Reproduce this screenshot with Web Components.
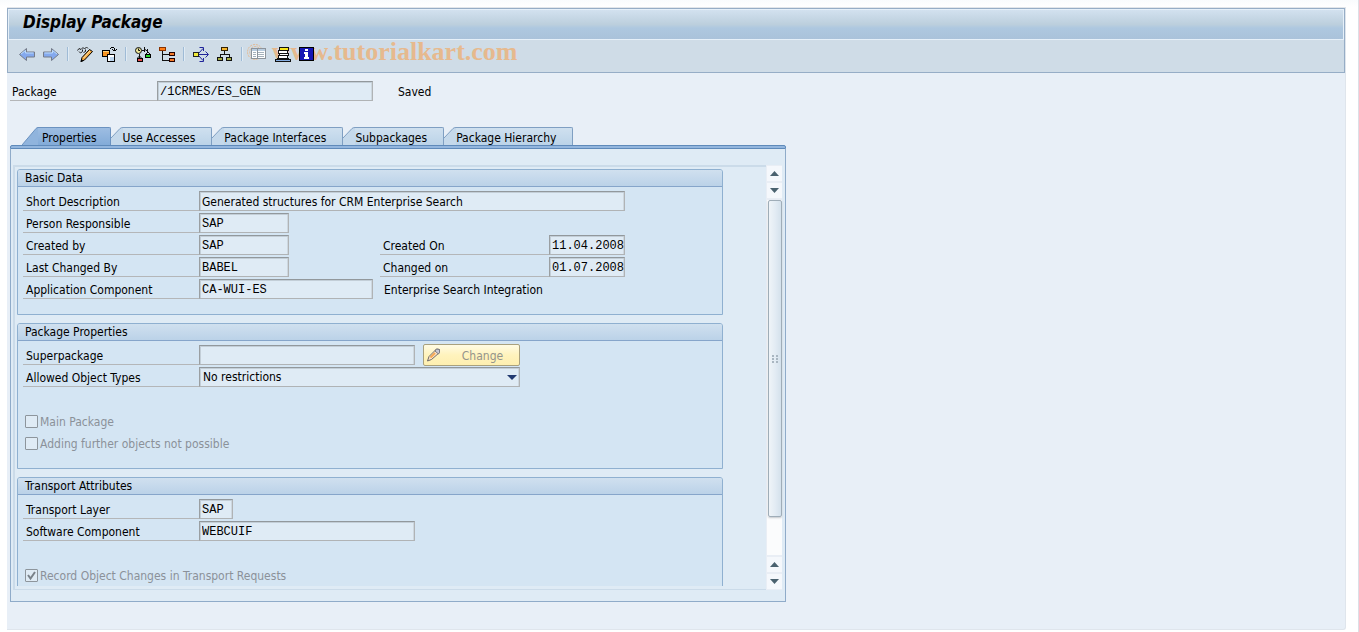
<!DOCTYPE html>
<html lang="en">
<head>
<meta charset="utf-8">
<title>Display Package</title>
<style>
    html, body{
        margin: 0;
        height: 100%;
    }
    body{
        background: linear-gradient(#f9fbfd, #ffffff 7px);
        font-family: "DejaVu Sans Condensed", "DejaVu Sans", sans-serif;
        font-size: 12px;
        color: #000000;
    }
    /* two fields side by side in a group */
    .pair{
        display: grid;
        grid-template-columns: 357px 245px;
    }
    .spacer{
        height: 20px;
    }
</style>
</head>
<body>
<sap-window heading="Display Package">
    <tool-bar slot="toolbar"></tool-bar>
    <form-field label="Package" value="/1CRMES/ES_GEN" size="216" class="package" style="--label-width: 147px; --label-pad: 2px">
        <span style="margin-left: 25px">Saved</span>
    </form-field>
    <tab-strip tabs="Properties|Use Accesses|Package Interfaces|Subpackages|Package Hierarchy">
        <group-box heading="Basic Data">
            <form-field label="Short Description" value="Generated structures for CRM Enterprise Search" size="426" plain></form-field>
            <form-field label="Person Responsible" value="SAP" size="90"></form-field>
            <div class="pair">
                <form-field label="Created by" value="SAP" size="90"></form-field>
                <form-field label="Created On" value="11.04.2008" size="76" style="--label-width: 169px"></form-field>
            </div>
            <div class="pair">
                <form-field label="Last Changed By" value="BABEL" size="90"></form-field>
                <form-field label="Changed on" value="01.07.2008" size="76" style="--label-width: 169px"></form-field>
            </div>
            <form-field label="Application Component" value="CA-WUI-ES" size="174">
                <span style="margin-left: 11px">Enterprise Search Integration</span>
            </form-field>
        </group-box>
        <group-box heading="Package Properties">
            <form-field label="Superpackage" value="" size="216">
                <change-button>Change</change-button>
            </form-field>
            <form-select label="Allowed Object Types" value="No restrictions" size="321"></form-select>
            <div class="spacer"></div>
            <check-field label="Main Package"></check-field>
            <check-field label="Adding further objects not possible"></check-field>
        </group-box>
        <group-box heading="Transport Attributes">
            <form-field label="Transport Layer" value="SAP" size="34"></form-field>
            <form-field label="Software Component" value="WEBCUIF" size="216"></form-field>
            <div class="spacer"></div>
            <check-field label="Record Object Changes in Transport Requests" checked></check-field>
        </group-box>
    </tab-strip>
</sap-window>

<template id="window-template">
    <style>
        :host{
            display: flex;
            box-sizing: border-box;
            height: 100%;
            min-height: 600px;
            padding: 7px 12px 2px 7px;
            border-right: 1px solid #dcdfe6;
        }
        .frame{
            flex: 1;
            min-width: 0;
            display: flex;
            flex-direction: column;
            box-sizing: border-box;
            background: #e8eff7;
            border-top: 1px solid #e3e6ea;
            border-right: 1px solid #dfe5ec;
            border-bottom: 1px solid #dfe5ec;
            border-radius: 0 0 3px 0;
        }
        header{
            border: 1px solid #96adc6;
        }
        h1{
            box-sizing: border-box;
            height: 31px;
            margin: 0;
            padding: 0 14px;
            border: 1px solid #e6f0f9;
            background: linear-gradient(#d2e1ef, #bccfdd 50%, #aec8e0 62%, #aac2da);
            font-size: 17px;
            line-height: 25px;
            font-style: italic;
            font-weight: bold;
        }
        main{
            flex: 1;
            min-height: 0;
            display: flex;
            flex-direction: column;
            gap: 26px;
            padding: 8px 3px 27px;
        }
    </style>
    <div class="frame">
        <header>
            <h1></h1>
            <slot name="toolbar"></slot>
        </header>
        <main><slot></slot></main>
    </div>
</template>

<template id="toolbar-template">
    <style>
        :host{
            display: flex;
            align-items: center;
            position: relative;
            box-sizing: border-box;
            height: 32px;
            padding: 0 0 4px 7px;
            background: #cfdce7;
        }
        button{
            display: flex;
            justify-content: center;
            align-items: center;
            width: 24px;
            height: 24px;
            padding: 0;
            border: 0;
            background: none;
            position: relative;
        }
        i{
            box-sizing: border-box;
            width: 2px;
            height: 14px;
            margin: 0 4px;
            border-left: 1px solid #9fbbd6;
            border-right: 1px solid #e0ebf4;
        }
        svg{
            display: block;
            width: 16px;
            height: 16px;
        }
        .pixel{
            shape-rendering: crispEdges;
        }
        /* site mark printed under the icons */
        .mark{
            display: flex;
            align-items: center;
            gap: 2px;
            position: absolute;
            left: 239px;
            top: -4px;
            font: bold 26px/32px "Liberation Serif", serif;
            color: #e6b98e;
        }
        .mark svg{
            width: 23px;
            height: 23px;
        }
    </style>
    <div class="mark">
        <svg viewBox="0 0 23 23" fill="none" stroke="#e6b98e"><circle cx="8" cy="11" r="7.500" stroke-dasharray="2 1"/><path d="M12 7a5.500 5.500 0 1 0 0 8" stroke-dasharray="2 1"/></svg>
        <span>www.tutorialkart.com</span>
    </div>
    <button title="Back"><svg viewBox="0 0 16 16"><path d="M.5 8.500L7.500 2.500V6H15.500V11H7.500V14.500Z" fill="#84a9ee" stroke="#757b88"/><path d="M2 8L6.500 4.500V7H14.500" fill="none" stroke="#bcdcfb"/></svg></button>
    <button title="Forward"><svg viewBox="0 0 16 16"><path d="M15.500 8.500L8.500 2.500V6H.5V11H8.500V14.500Z" fill="#84a9ee" stroke="#757b88"/><path d="M1.500 7H9.500V4.500L14 8" fill="none" stroke="#bcdcfb"/></svg></button>
    <i></i>
    <button title="Display/Change"><svg viewBox="0 0 16 16"><path d="M.5 4.500L2 2.500l2 1 2-2 1.500 1.500 2-2 1.500 1.500M2 5.500l1.500 1.500 2-1.500V3.500M6.500 6.500l2-1V3.500" fill="none" stroke="#222"/><path d="M4 15.500L5 11.500L12.500 3.500L15.500 5.500L7.500 14Z" fill="#f7a83c" stroke="#000"/><path d="M6.500 12L13 5" stroke="#ffe6b0"/><path d="M3.500 16l1-3 2 2z"/></svg></button>
    <button title="Other Object"><svg viewBox="0 0 16 16" class="pixel"><path d="M1.500 4.500h7v6h-7z" fill="#f79421" stroke="#000"/><path d="M2 5.500h6" stroke="#ffd37c"/><path d="M6.500 8.500h7v7h-7z" fill="#fff" stroke="#000"/><path d="M9 11h4v4H9z" fill="#bcd5ee"/><path d="M9 2h1v1H9zM10 1h3v1h-3zM13 2h1v3h-1zM12 4h3v1h-3zM11 3h1v1h-1zM15 3h1v1h-1z"/></svg></button>
    <i></i>
    <button title="Check"><svg viewBox="0 0 16 16"><circle cx="3.500" cy="4.500" r="3" fill="#eee89a" stroke="#111"/><path d="M3.500 2.500v2h1.500M7 4.500h2.500M9.500 1v5M12.500 3v3M10 3.500l3 2M4.500 8v4M11 8l2-2 2 2M2.500 12l2-2 2 2" fill="none" stroke="#111"/><g class="pixel" stroke="#000"><path d="M10.500 8.500h5v3h-5z" fill="#26d926"/><path d="M2.500 12.500h5v3h-5z" fill="#e64c4c"/></g></svg></button>
    <button title="Where-Used List"><svg viewBox="0 0 16 16" class="pixel"><path d="M3.500 5v9.500H10M4 8.500h6" fill="none" stroke="#111"/><path d="M.5 1.500h6v3h-6z" fill="#ff7d16" stroke="#8a3200"/><path d="M10.500 6.500h5v3h-5zM10.500 12.500h5v3h-5z" fill="#f47b2a" stroke="#200"/></svg></button>
    <i></i>
    <button title="Navigate"><svg viewBox="0 0 16 16"><path d="M6 8.500H15M12.500 5.500l3 3-3 3M6 7l4-4.500M6.500 1.500H10.500V5M6 10l4 4.500M6.500 15.500H10.500V12" fill="none" stroke="#20249b"/><path class="pixel" d="M.5 6.500h5v4h-5z" fill="#f2eb39" stroke="#222"/></svg></button>
    <button title="Hierarchy"><svg viewBox="0 0 16 16" class="pixel"><path d="M7.500 5v3M3.500 11V8.500H12.500V11" fill="none" stroke="#111"/><path d="M4.500 1.500h6v3h-6z" fill="#f5b62e" stroke="#332000"/><path d="M.5 11.500h5v3h-5zM9.500 11.500h5v3h-5z" fill="#a6ad45" stroke="#111"/></svg></button>
    <i></i>
    <button title="List"><svg viewBox="0 0 16 16" class="pixel"><path d="M.5 2.500h14v10H.5z" fill="#fff" stroke="#8d949c"/><path d="M1 3h13v2H1z" fill="#b9cde0"/><path d="M2 6.500h3M2 8.500h3M2 10.500h3M7 6.500h6M7 8.500h6M7 10.500h6" stroke="#a5b1bb"/><path d="M6 3v9" stroke="#8d949c"/></svg></button>
    <button title="Print"><svg viewBox="0 0 16 16" class="pixel"><path d="M4.500 1.500h9v3h-9z" fill="#f7e51c" stroke="#111"/><path d="M3.500 4.500h9v3h-9zM4.500 7.500h9v2h-9zM3.500 9.500h9v3h-9z" fill="#fff" stroke="#111"/><path d="M.5 13.500h15v2H.5z" fill="#86aee2" stroke="#111"/><path d="M2 12.500h12" stroke="#111"/></svg></button>
    <button title="Information"><svg viewBox="0 0 16 16" class="pixel"><path d="M.5 1.500h14v13H.5z" fill="#1616b5" stroke="#000"/><path d="M6 3h3v2H6zM5 6h4v5h1v2H5v-2h1V8H5z" fill="#fff"/></svg></button>
</template>

<template id="tabs-template">
    <style>
        :host{
            display: flex;
            flex-direction: column;
            flex: 1;
            min-height: 0;
            max-width: 776px;
        }
        nav{
            display: flex;
            padding-left: 12px;
        }
        button{
            display: flex;
            height: 18px;
            padding: 0;
            border: 0;
            background: none;
            font: inherit;
            color: inherit;
            white-space: nowrap;
        }
        button svg{
            width: 12px;
            height: 18px;
        }
        button span{
            box-sizing: border-box;
            height: 18px;
            padding-right: 16px;
            border-top: 1px solid #7f9fc2;
            border-right: 1px solid #7f9fc2;
            border-radius: 0 2px 0 0;
            background: linear-gradient(#cfe0ef, #bbd3e8);
            line-height: 20px;
        }
        button.active svg{
            width: 16px;
        }
        button.active span{
            padding: 0 13px 0 4px;
            background: linear-gradient(#9dbde2, #83abd8);
            border-color: #6b92c0;
        }
        .panel{
            flex: 1;
            min-height: 0;
            display: flex;
            box-sizing: border-box;
            padding: 16px 3px 11px 2px;
            border: 1px solid #8fabc9;
            border-top: 0;
            background: #dfebf5;
        }
        .band{
            box-sizing: border-box;
            height: 4px;
            border: 1px solid #5f8aba;
            border-radius: 2px 2px 0 0;
            background: #93b6de;
        }
        .view{
            flex: 1;
            min-width: 0;
            box-sizing: border-box;
            padding: 2px 43px 3px 2px;
            border: 2px solid #cbdbe9;
            border-right: 0;
            border-bottom-width: 1px;
        }
        .content{
            display: flex;
            flex-direction: column;
            gap: 8px;
            height: 100%;
            overflow: hidden;
        }
    </style>
    <nav role="tablist"></nav>
    <div class="band"></div>
    <div class="panel">
        <div class="view"><div class="content"><slot></slot></div></div>
        <scroll-bar></scroll-bar>
    </div>
</template>

<template id="scroll-template">
    <style>
        :host{
            display: flex;
            flex-direction: column;
            gap: 2px;
            width: 16px;
            box-sizing: border-box;
            padding: 1px 0 1px 1px;
            background: #e9eef5;
        }
        button{
            display: flex;
            justify-content: center;
            align-items: center;
            width: 15px;
            height: 15px;
            padding: 0;
            border: 0;
            background: #f5f8fc;
        }
        .track{
            flex: 1;
            display: flex;
            background: #fbfcfd;
            padding: 0 0 38px 1px;
        }
        .thumb{
            flex: 1;
            display: flex;
            justify-content: center;
            align-items: center;
            border: 1px solid #9fadb8;
            border-radius: 2px;
            background: linear-gradient(90deg, #eff4f8, #e3ecf4 50%, #d4e1ec);
            box-shadow: 0 1px 2px #c4c8cc;
        }
    </style>
    <button title="Up"><svg width="9" height="5"><path d="M0 5L4.500 0L9 5Z" fill="#4a626f"/></svg></button>
    <button title="Down"><svg width="9" height="5"><path d="M0 0H9L4.500 5Z" fill="#4a626f"/></svg></button>
    <div class="track"><div class="thumb"><svg width="6" height="8" shape-rendering="crispEdges"><path d="M0 0h2v2H0zM4 0h2v2H4zM0 3h2v2H0zM4 3h2v2H4zM0 6h2v2H0zM4 6h2v2H4z" fill="#a9b6c1"/></svg></div></div>
    <button title="Up"><svg width="9" height="5"><path d="M0 5L4.500 0L9 5Z" fill="#4a626f"/></svg></button>
    <button title="Down"><svg width="9" height="5"><path d="M0 0H9L4.500 5Z" fill="#4a626f"/></svg></button>
</template>

<template id="group-template">
    <style>
        :host{
            display: block;
            flex: none;
            border: 1px solid #8fb0d0;
            border-radius: 3px 3px 0 0;
            background: #d4e5f3;
        }
        h2{
            box-sizing: border-box;
            height: 17px;
            margin: 0;
            padding: 0 7px;
            border-bottom: 1px solid #86a5ca;
            border-radius: 2px 2px 0 0;
            background: linear-gradient(#d0e0ef, #bbd2e8);
            font-size: 12px;
            font-weight: normal;
            line-height: 17px;
        }
        .rows{
            display: flex;
            flex-direction: column;
            gap: 2px;
            padding: 4px 5px 15px;
        }
    </style>
    <h2></h2>
    <div class="rows"><slot></slot></div>
</template>

<template id="field-template">
    <style>
        :host{
            display: flex;
            align-items: center;
            height: 20px;
            white-space: nowrap;
        }
        label{
            box-sizing: border-box;
            width: var(--label-width, 176px);
            height: 20px;
            padding-left: var(--label-pad, 3px);
            border-bottom: 1px solid #b4b6b8;
            line-height: 22px;
        }
        ::slotted(span){
            line-height: 20px;
            padding-top: 2px;
        }
        input, select{
            box-sizing: border-box;
            height: 20px;
            margin: 0;
            padding: 2px 0 0 2px;
            border: 1px solid #b0b3b5;
            border-top-color: #92989c;
            border-left-color: #9a9fa2;
            border-radius: 0;
            background: #dfebf5;
            box-shadow: inset 1px 1px 0 #c3ced7, inset -1px 0 0 #cdd7df;
            color: #000;
            font: 12px "Liberation Mono", monospace;
            outline: 0;
        }
        :host([plain]) input, select{
            font: inherit;
        }
        .select{
            display: grid;
            align-items: center;
        }
        .select > *{
            grid-area: 1 / 1;
        }
        select{
            appearance: none;
            padding: 0 3px;
            opacity: 1;
        }
        .select svg{
            justify-self: end;
            margin-right: 3px;
        }
    </style>
    <label for="control"></label>
    <input id="control" type="text" readonly>
    <slot></slot>
</template>

<template id="check-template">
    <style>
        :host{
            display: flex;
            align-items: center;
            height: 20px;
            padding-left: 2px;
            color: #8b9199;
        }
        input{
            appearance: none;
            box-sizing: border-box;
            width: 13px;
            height: 13px;
            margin: 0 2px 0 0;
            border: 1px solid #8d959c;
            border-radius: 1px;
            background: #dfebf5;
        }
        label{
            padding-top: 2px;
        }
        .box{
            display: grid;
        }
        .box > *{
            grid-area: 1 / 1;
        }
        svg{
            display: none;
        }
        input:checked + svg{
            display: block;
        }
    </style>
    <div class="box"><input id="control" type="checkbox" disabled><svg width="13" height="13"><path d="M3 6L5.500 9.500L10 3" fill="none" stroke="#79828a" stroke-width="2"/></svg></div>
    <label for="control"></label>
</template>

<template id="button-template">
    <style>
        :host{
            display: block;
            margin-left: 8px;
        }
        button{
            display: flex;
            align-items: center;
            box-sizing: border-box;
            width: 97px;
            height: 22px;
            padding: 0 2px;
            border: 1px solid #a9a17e;
            border-radius: 2px;
            background: linear-gradient(#fffbe4, #fff3bd 50%, #feefb0);
            font: inherit;
            color: #94948c;
        }
        span{
            flex: 1;
            padding: 2px 0 0 6px;
        }
    </style>
    <button disabled><svg width="16" height="16" viewBox="0 0 16 16"><path d="M1.500 14L3 9.500L10.500 2L13.500 2.500V5.500L5.500 12.500Z" fill="#fce3c4" stroke="#6f6a66"/><path d="M9 4l3.500 3L13.500 5.500V2.500L10.500 2z" fill="#c9c9d6" stroke="#7a7a80"/><path d="M4.500 10.500L9 6" stroke="#f5a856" stroke-width="2"/></svg><span><slot></slot></span></button>
</template>

<script>
class BaseElement extends HTMLElement {
  constructor(id) {
    super();
    this.attachShadow({ mode: 'open' });
    this.shadowRoot.appendChild(document.getElementById(id).content.cloneNode(true));
  }

  find(selector) {
    return this.shadowRoot.querySelector(selector);
  }
}

class SapWindow extends BaseElement {
  constructor() {
    super('window-template');
    this.find('h1').textContent = this.getAttribute('heading');
  }
}

class ToolBar extends BaseElement {
  constructor() {
    super('toolbar-template');
    this.shadowRoot.querySelectorAll('button').forEach(button => {
      button.setAttribute('aria-label', button.title);
    });
  }
}

class TabStrip extends BaseElement {
  constructor() {
    super('tabs-template');
    let nav = this.find('nav');
    this.getAttribute('tabs').split('|').forEach((name, i) => {
      let button = document.createElement('button');
      button.setAttribute('role', 'tab');
      button.setAttribute('aria-selected', i == 0);
      if(i == 0){
        button.className = 'active';
        button.innerHTML = `<svg viewBox="0 0 16 18"><path d="M0 18L14 1.500Q15 .5 16 .5V18Z" fill="#90b4dd"/><path d="M0 18L14 1.500Q15 .5 16 .5" fill="none" stroke="#6b92c0"/></svg>`;
      }else{
        button.innerHTML = `<svg viewBox="0 0 12 18"><path d="M0 11L9 1.500Q10 .5 12 .5V18H0Z" fill="#c5d9eb"/><path d="M0 11L9 1.500Q10 .5 12 .5" fill="none" stroke="#7f9fc2"/></svg>`;
      }
      let text = document.createElement('span');
      text.textContent = name;
      button.appendChild(text);
      nav.appendChild(button);
    });
  }
}

class ScrollBar extends BaseElement {
  constructor() {
    super('scroll-template');
  }
}

class GroupBox extends BaseElement {
  constructor() {
    super('group-template');
    this.find('h2').textContent = this.getAttribute('heading');
  }
}

class FormField extends BaseElement {
  constructor() {
    super('field-template');
    let input = this.find('input');
    this.find('label').textContent = this.getAttribute('label');
    input.value = this.getAttribute('value');
    input.style.width = `${this.getAttribute('size')}px`;
  }
}

class FormSelect extends BaseElement {
  constructor() {
    super('field-template');
    this.find('label').textContent = this.getAttribute('label');
    let box = document.createElement('div');
    box.className = 'select';
    box.innerHTML = `<select id="control"><option></option></select><svg width="10" height="5"><path d="M0 0H10L5 5Z" fill="#223a70"/></svg>`;
    box.querySelector('option').textContent = this.getAttribute('value');
    box.querySelector('select').style.width = `${this.getAttribute('size')}px`;
    this.find('input').replaceWith(box);
  }
}

class CheckField extends BaseElement {
  constructor() {
    super('check-template');
    this.find('label').textContent = this.getAttribute('label');
    this.find('input').checked = this.hasAttribute('checked');
  }
}

class ChangeButton extends BaseElement {
  constructor() {
    super('button-template');
  }
}

window.customElements.define('sap-window', SapWindow);
window.customElements.define('tool-bar', ToolBar);
window.customElements.define('scroll-bar', ScrollBar);
window.customElements.define('tab-strip', TabStrip);
window.customElements.define('group-box', GroupBox);
window.customElements.define('form-field', FormField);
window.customElements.define('form-select', FormSelect);
window.customElements.define('check-field', CheckField);
window.customElements.define('change-button', ChangeButton);
</script>
</body>
</html>
